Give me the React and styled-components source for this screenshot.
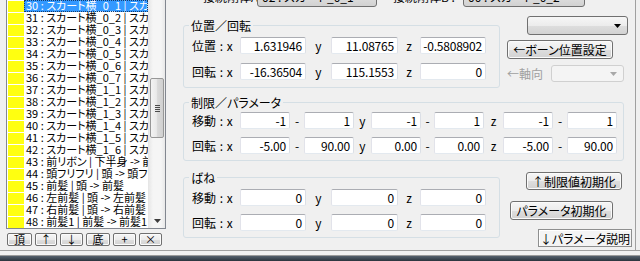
import React from 'react';
import styled, { createGlobalStyle } from 'styled-components';

const GlobalStyle = createGlobalStyle`
  html, body { margin: 0; padding: 0; background: #f0f0f0; }
  body {
    font-family: "Noto Sans CJK JP", "Noto Sans", sans-serif;
    font-size: 12px;
    color: #000;
    font-feature-settings: "palt";
  }
`;

const Window = styled.div`
  width: 640px;
  height: 261px;
  overflow: hidden;
  display: flex;
  flex-direction: column;
  background: #f0f0f0;
`;

const Main = styled.div`
  display: flex;
  height: 250px;
  border-bottom: 1px solid #a0a0a0;
`;

const Footer = styled.div`
  flex: 1;
  background: linear-gradient(to bottom, #f0f0f0 0, #f0f0f0 4px, #9a9a9a 4px, #9a9a9a 5px, #55606c 5px, #2a333d 100%);
`;

/* ---------- left: bone list ---------- */

const LeftPane = styled.div`
  width: 166px;
  flex-shrink: 0;
  display: flex;
  flex-direction: column;
`;

const ListBox = styled.div`
  margin-left: 6px;
  width: 160px;
  height: 229px;
  box-sizing: border-box;
  border: 1px solid #828790;
  border-top: none;
  background: #fff;
  display: flex;
`;

const Rows = styled.div`
  flex: 1;
  min-width: 0;
  overflow: hidden;
`;

const Row = styled.div`
  display: flex;
  height: 12px;
`;

const Swatch = styled.div`
  width: 16px;
  height: 11px;
  margin: 1px 0 0 1px;
  background: #ffff10;
  flex-shrink: 0;
`;

const RowText = styled.div`
  flex: 1;
  min-width: 0;
  padding-left: 2px;
  white-space: nowrap;
  overflow: hidden;
  font-size: 11px;
  line-height: 12px;
  background: ${p => (p.selected ? '#3399ff' : 'transparent')};
  color: ${p => (p.selected ? '#fff' : '#000')};
  outline: ${p => (p.selected ? '1px dotted #1a3e6a' : 'none')};
  outline-offset: -1px;
`;

const RowInner = styled.span`
  display: block;
  margin-top: -1px;
`;

const ScrollBar = styled.div`
  width: 17px;
  flex-shrink: 0;
  display: flex;
  flex-direction: column;
  box-sizing: border-box;
  border-left: 1px solid #e6e6e6;
  background: linear-gradient(90deg, #e8e8e8, #f5f5f5 25%, #f5f5f5 75%, #e8e8e8);
`;

const Thumb = styled.div`
  margin: ${p => p.top}px 1px 0 1px;
  height: 60px;
  box-sizing: border-box;
  border: 1px solid #979797;
  border-radius: 2px;
  background: linear-gradient(90deg, #f3f3f3, #e9e9e9 45%, #d9d9d9 55%, #d0d0d0);
  display: flex;
  align-items: center;
  justify-content: center;
`;

const Grip = styled.div`
  width: 5px;
  height: 7px;
  background: repeating-linear-gradient(#4a4a4a 0, #4a4a4a 1px, transparent 1px, transparent 2px);
`;

const ScrollArrow = styled.div`
  margin-top: auto;
  height: 14px;
  display: flex;
  align-items: center;
  justify-content: center;
`;

const ListButtons = styled.div`
  display: flex;
  gap: 3px;
  padding: 4px 0 0 7px;
`;

const SmallButton = styled.button`
  width: ${p => p.w}px;
  height: 13px;
  padding: 0;
  box-sizing: border-box;
  border: 1px solid #707070;
  border-radius: 2px;
  background: linear-gradient(#f6f6f6, #ececec 50%, #dedede 51%, #d2d2d2);
  box-shadow: inset 0 0 0 1px #fbfbfb;
  font: inherit;
  font-size: 11px;
  line-height: 11px;
  color: #000;
`;

/* ---------- right: joint parameters ---------- */

const RightPane = styled.div`
  width: 470px;
  flex-shrink: 0;
  box-sizing: border-box;
  padding-left: 17px;
  border-right: 1px solid #a0a0a0;
  display: flex;
  flex-direction: column;
`;

const TopRow = styled.div`
  display: flex;
  align-items: center;
  height: 21px;
  margin-top: -14px;
  padding-left: 20px;
`;

const TopLabel = styled.span`
  width: ${p => p.w}px;
  margin-left: ${p => p.ml || 0}px;
  white-space: nowrap;
  flex-shrink: 0;
`;

const Combo = styled.div`
  width: ${p => p.w}px;
  height: ${p => p.h}px;
  margin-left: ${p => p.ml || 0}px;
  box-sizing: border-box;
  border: 1px solid ${p => (p.disabled ? '#d0d0d0' : '#707070')};
  border-radius: 3px;
  background: ${p => (p.disabled
    ? '#f4f4f4'
    : 'linear-gradient(#f6f6f6, #ececec 50%, #dedede 51%, #d2d2d2)')};
  display: flex;
  align-items: center;
  padding: 0 6px 0 4px;
  white-space: nowrap;
  flex-shrink: 0;
`;

const ComboText = styled.span`
  flex: 1;
  overflow: hidden;
`;

const Section = styled.div`
  display: flex;
  align-items: flex-start;
  margin-top: ${p => p.mt}px;
`;

const Group = styled.fieldset`
  margin: ${p => p.mt || 0}px 0 0 0;
  padding: 0;
  width: ${p => p.w}px;
  min-width: 0;
  box-sizing: border-box;
  border: 1px solid #d5dfe5;
  border-radius: 3px;
`;

const Legend = styled.legend`
  margin-left: 5px;
  padding: 0 2px;
  line-height: 13px;
  font-size: 12px;
`;

const GroupBody = styled.div`
  display: flex;
  flex-direction: column;
  gap: ${p => p.gap}px;
  padding: ${p => p.pt}px 0 ${p => p.pb}px 8px;
`;

const FieldRow = styled.div`
  display: flex;
  align-items: center;
  height: 17px;
`;

const RowLabel = styled.span`
  width: 48px;
  flex-shrink: 0;
  white-space: nowrap;
  word-spacing: 1px;
`;

const Axis = styled.span`
  width: ${p => p.w}px;
  flex-shrink: 0;
  text-align: center;
`;

const NumBox = styled.div`
  width: ${p => p.w}px;
  height: 17px;
  flex-shrink: 0;
  box-sizing: border-box;
  border: 1px solid;
  border-color: #abadb3 #dbdfe6 #e3e9ef #e2e3ea;
  border-radius: 2px;
  background: #fff;
  text-align: right;
  padding-right: 3px;
  line-height: 15px;
  white-space: nowrap;
  letter-spacing: -0.2px;
`;

const SideCol = styled.div`
  display: flex;
  flex-direction: column;
  align-items: flex-start;
  margin-left: 7px;
`;

const Button = styled.button`
  width: ${p => p.w}px;
  height: ${p => p.h}px;
  margin: ${p => p.mt || 0}px 0 0 ${p => p.ml || 0}px;
  padding: 0;
  box-sizing: border-box;
  border: 1px solid #707070;
  border-radius: 3px;
  background: linear-gradient(#f6f6f6, #ececec 50%, #dedede 51%, #d2d2d2);
  box-shadow: inset 0 0 0 1px #fbfbfb;
  font: inherit;
  font-size: 12px;
  color: #000;
  white-space: nowrap;
`;

const FlatButton = styled(Button)`
  border: 1px solid #8e8f8f;
  border-radius: 0;
  background: #f4f4f4;
  box-shadow: inset 1px 1px 0 #fff;
`;

const AxisRow = styled.div`
  display: flex;
  align-items: center;
  margin-top: ${p => p.mt}px;
`;

const DimLabel = styled.span`
  width: 44px;
  color: #a0a0a0;
  white-space: nowrap;
`;

const Arrow = ({ color = '#000' }) => (
  <svg width="7" height="4" viewBox="0 0 7 4">
    <path d="M0 0 H7 L3.5 4 Z" fill={color} />
  </svg>
);

const skirt = ['0_1', '0_2', '0_3', '0_4', '0_5', '0_6', '0_7', '1_1', '1_2', '1_3', '1_4', '1_5', '1_6'];
const bones = [
  ...skirt.map((s, i) => `${30 + i} : スカート横_${s} | スカート横_${s} -> スカート`),
  '43 : 前リボン | 下半身 -> 前リボン',
  '44 : 頭フリフリ | 頭 -> 頭フリフリ',
  '45 : 前髪 | 頭 -> 前髪',
  '46 : 左前髪 | 頭 -> 左前髪',
  '47 : 右前髪 | 頭 -> 右前髪',
  '48 : 前髪1 | 前髪 -> 前髪1',
];

const XYZ = ({ label, values }) => (
  <FieldRow>
    <RowLabel>{label}</RowLabel>
    <NumBox w={66}>{values[0]}</NumBox>
    <Axis w={25}>y</Axis>
    <NumBox w={67}>{values[1]}</NumBox>
    <Axis w={22}>z</Axis>
    <NumBox w={66}>{values[2]}</NumBox>
  </FieldRow>
);

const Range = ({ label, values }) => (
  <FieldRow>
    <RowLabel>{label}</RowLabel>
    <NumBox w={50}>{values[0]}</NumBox>
    <Axis w={14}>-</Axis>
    <NumBox w={50}>{values[1]}</NumBox>
    <Axis w={17}>y</Axis>
    <NumBox w={50}>{values[2]}</NumBox>
    <Axis w={13}>-</Axis>
    <NumBox w={50}>{values[3]}</NumBox>
    <Axis w={19}>z</Axis>
    <NumBox w={50}>{values[4]}</NumBox>
    <Axis w={14}>-</Axis>
    <NumBox w={50}>{values[5]}</NumBox>
  </FieldRow>
);

export default function App() {
  return (
    <Window>
      <GlobalStyle />
      <Main>
        <LeftPane>
          <ListBox>
            <Rows>
              {bones.map((b, i) => (
                <Row key={b}>
                  <Swatch />
                  <RowText selected={i === 0}>
                    <RowInner>{b}</RowInner>
                  </RowText>
                </Row>
              ))}
            </Rows>
            <ScrollBar>
              <Thumb top={78}>
                <Grip />
              </Thumb>
              <ScrollArrow>
                <Arrow color="#3c3c3c" />
              </ScrollArrow>
            </ScrollBar>
          </ListBox>
          <ListButtons>
            <SmallButton w={25}>頂</SmallButton>
            <SmallButton w={22}>↑</SmallButton>
            <SmallButton w={23}>↓</SmallButton>
            <SmallButton w={24}>底</SmallButton>
            <SmallButton w={23}>+</SmallButton>
            <SmallButton w={23}>×</SmallButton>
          </ListButtons>
        </LeftPane>

        <RightPane>
          <TopRow>
            <TopLabel w={54}>接続剛体A :</TopLabel>
            <Combo w={120} h={21}>
              <ComboText>02 : スカート_0_1</ComboText>
              <Arrow />
            </Combo>
            <TopLabel w={70} ml={16}>接続剛体B :</TopLabel>
            <Combo w={122} h={21}>
              <ComboText>00 : スカート_0_2</ComboText>
              <Arrow />
            </Combo>
          </TopRow>

          <Section mt={9}>
            <Group w={317} mt={3}>
              <Legend>位置／回転</Legend>
              <GroupBody pt={5} gap={9} pb={7}>
                <XYZ label="位置 : x" values={['1.631946', '11.08765', '-0.5808902']} />
                <XYZ label="回転 : x" values={['-16.36504', '115.1553', '0']} />
              </GroupBody>
            </Group>
            <SideCol>
              <Combo w={101} h={19} ml={20}>
                <ComboText />
                <Arrow />
              </Combo>
              <Button w={106} h={19} mt={5}>←ボーン位置設定</Button>
              <AxisRow mt={6}>
                <DimLabel>←軸向</DimLabel>
                <Combo w={73} h={17} disabled>
                  <ComboText />
                  <Arrow color="#a8a8a8" />
                </Combo>
              </AxisRow>
            </SideCol>
          </Section>

          <Section mt={8}>
            <Group w={441}>
              <Legend>制限／パラメータ</Legend>
              <GroupBody pt={3} gap={8} pb={6}>
                <Range label="移動 : x" values={['-1', '1', '-1', '1', '-1', '1']} />
                <Range label="回転 : x" values={['-5.00', '90.00', '0.00', '0.00', '-5.00', '90.00']} />
              </GroupBody>
            </Group>
          </Section>

          <Section mt={10}>
            <Group w={317}>
              <Legend>ばね</Legend>
              <GroupBody pt={5} gap={8} pb={6}>
                <XYZ label="移動 : x" values={['0', '0', '0']} />
                <XYZ label="回転 : x" values={['0', '0', '0']} />
              </GroupBody>
            </Group>
            <SideCol>
              <Button w={96} h={18} mt={1} ml={19}>↑制限値初期化</Button>
              <Button w={103} h={19} mt={11} ml={3}>パラメータ初期化</Button>
              <FlatButton w={94} h={18} mt={9} ml={31}>↓パラメータ説明</FlatButton>
            </SideCol>
          </Section>
        </RightPane>
      </Main>
      <Footer />
    </Window>
  );
}
